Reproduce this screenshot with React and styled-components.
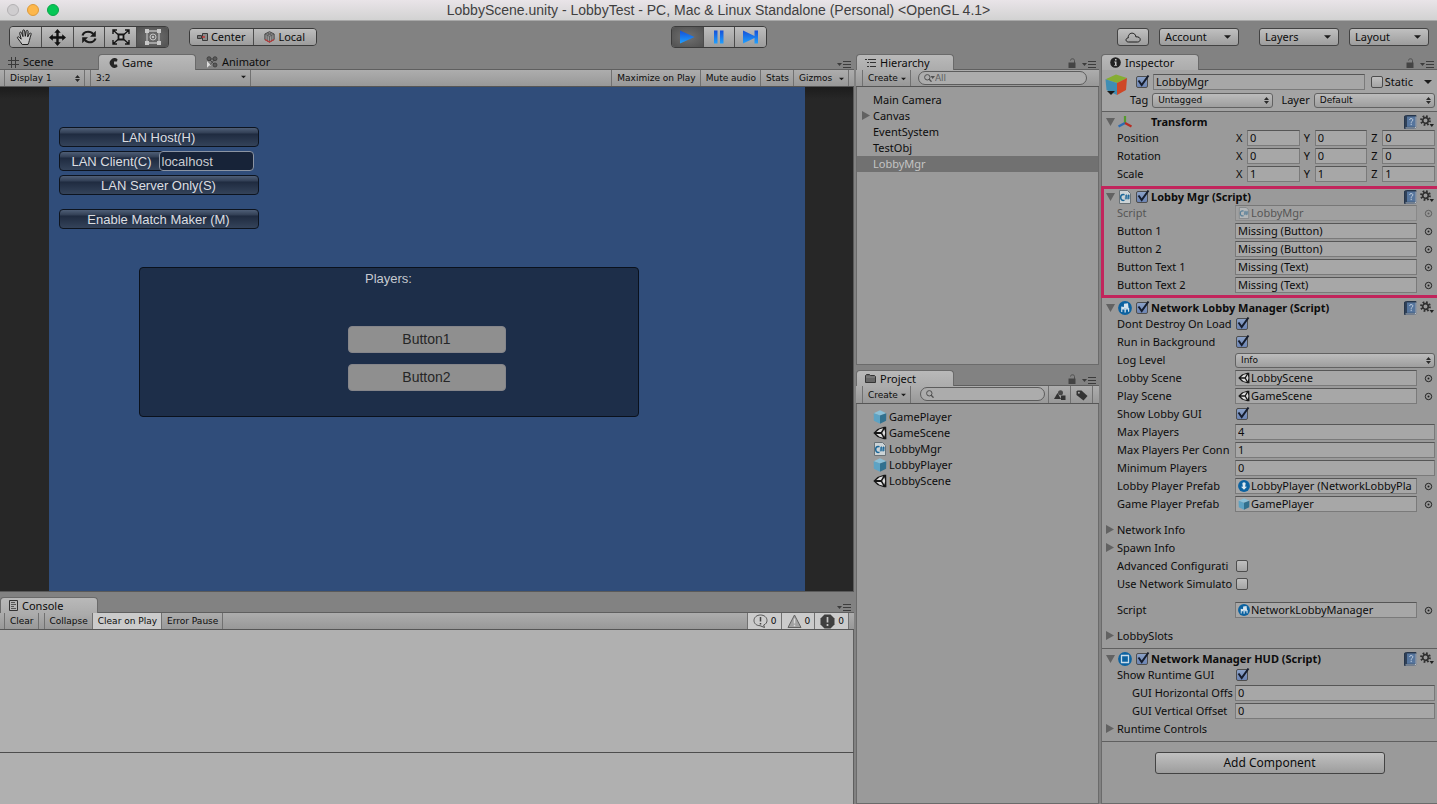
import React, { useId } from "react"
import styled, { createGlobalStyle, css } from "styled-components"

const font_ui = `"Noto Sans", "Open Sans", sans-serif`
const font_mini = `"DejaVu Sans", sans-serif`
const font_game = `"Liberation Sans", Arial, sans-serif`

const color_chrome = "#828282"
const color_panel = "#9a9a9a"
const color_line = "#5f5f5f"
const color_text = "#0c0c0c"
const color_icon = "#3c3c3c"
const color_accent = "#c2255c"

const GlobalStyle = createGlobalStyle`
  * {
    box-sizing: border-box;
  }
  body {
    margin: 0;
    background: ${color_chrome};
    color: ${color_text};
    font: 11px/16px ${font_ui};
  }
  button, input, select {
    font: inherit;
    color: inherit;
    margin: 0;
    padding: 0;
    border: 0;
    border-radius: 0;
    background: none;
    appearance: none;
    min-width: 0;
    outline: none;
  }
  svg {
    display: block;
    flex: none;
  }
`

const Flex = (justify, align) => css`
  display: flex;
  justify-content: ${justify};
  align-items: ${align};
`

const buttonFace = css`
  background: linear-gradient(#c0c0c0, #9d9d9d);
  border: 1px solid #434343;
`

/* ---------- window ---------- */

const Window = styled.div`
  display: flex;
  flex-direction: column;
  height: 100vh;
  overflow: hidden;
`

const TitleBar = styled.header`
  ${Flex("center", "center")}
  position: relative;
  height: 21px;
  flex: none;
  background: linear-gradient(#e9e4e8, #d2d2d2);
  border-bottom: 1px solid #a8a8a8;
`

const Title = styled.h1`
  margin: 0;
  font: 14px/20px ${font_game};
  color: #3f3f3f;
`

const Lights = styled.div`
  ${Flex("flex-start", "center")}
  gap: 8px;
  position: absolute;
  left: 7px;
  top: 4px;
`

const Light = styled.button`
  width: 12px;
  height: 12px;
  border-radius: 50%;
  background: ${(p) => p.$fill};
  border: 1px solid ${(p) => p.$edge};
`

const Toolbar = styled.div`
  display: grid;
  grid-template-columns: 1fr auto 1fr;
  align-items: center;
  flex: none;
  height: 32px;
  padding: 0 8px 0 9px;
`

const ToolGroup = styled.div`
  ${Flex("flex-start", "center")}
  gap: 20px;
`

const ToolSet = styled.div`
  display: flex;
  width: ${(p) => p.$width}px;
  border: 1px solid #3b3b3b;
  border-radius: 4px;
  overflow: hidden;
`

const ToolButton = styled.button`
  ${Flex("center", "center")}
  gap: 3px;
  flex: 1;
  height: ${(p) => (p.$wide ? 16 : 20)}px;
  background: ${(p) =>
    p.$on ? "radial-gradient(#717171, #505050)" : "linear-gradient(#bebebe, #9c9c9c)"};
  & + & {
    border-left: 1px solid #4c4c4c;
  }
`

const RightTools = styled.div`
  ${Flex("flex-end", "center")}
  gap: 10px;
`

const CloudButton = styled.button`
  ${Flex("center", "center")}
  ${buttonFace}
  width: 32px;
  height: 18px;
  border-radius: 3px;
`

const MenuButton = styled.button`
  ${Flex("space-between", "center")}
  ${buttonFace}
  width: 80px;
  height: 18px;
  padding: 0 7px 0 5px;
  border-radius: 3px;
  margin-right: ${(p) => p.$after || 0}px;
`

/* ---------- panels ---------- */

const Workspace = styled.main`
  display: grid;
  grid-template-columns: minmax(0, 1fr) 243px 336px;
  column-gap: 2px;
  flex: 1;
  min-height: 0;
`

const Column = styled.div`
  display: grid;
  grid-template-rows: ${(p) => p.$rows};
  row-gap: 4px;
  min-height: 0;
  min-width: 0;
`

const Panel = styled.section`
  display: flex;
  flex-direction: column;
  min-height: 0;
  min-width: 0;
`

const TabRow = styled.div`
  display: flex;
  flex: none;
  height: 17px;
  padding-top: 1px;
  border-bottom: 1px solid ${color_line};
`

const Tab = styled.button`
  ${Flex("flex-start", "center")}
  gap: 4px;
  width: 98px;
  height: 16px;
  padding-left: ${(p) => p.$pad || 8}px;
  border-radius: 4px 4px 0 0;
  ${(p) =>
    p.$on &&
    css`
      background: linear-gradient(#b9b9b9, #acacac);
      border: 1px solid #6a6a6a;
      border-bottom: 0;
    `}
`

const TabTools = styled.div`
  ${Flex("flex-end", "flex-end")}
  gap: 6px;
  margin-left: auto;
  padding: 0 3px 1px 0;
`

const Strip = styled.div`
  display: flex;
  flex: none;
  height: ${(p) => p.$height || 17}px;
  padding-left: ${(p) => p.$start || 4}px;
  padding-right: ${(p) => p.$end || 0}px;
  background: linear-gradient(#adadad, #989898);
  border-bottom: 1px solid #565656;
  font: 9px/15px ${font_mini};
`

const StripButton = styled.button`
  ${Flex("center", "center")}
  gap: 3px;
  padding: 1px 4px 0 5px;
  border-right: 1px solid #717171;
  border-left: ${(p) => (p.$first ? "1px solid #717171" : 0)};
  background: ${(p) => (p.$on ? "#cbcbcb" : "none")};
  min-width: ${(p) => p.$min || 0}px;
`

const Spacer = styled.div`
  flex: ${(p) => (p.$size ? `0 0 ${p.$size}px` : 1)};
`

/* ---------- drop-downs and tick boxes ---------- */

const SelectBox = styled.span`
  position: relative;
  display: flex;
  min-width: 0;
  flex: ${(p) => (p.$width ? `0 0 ${p.$width}px` : 1)};
  font: 9px/13px ${font_mini};
  select {
    width: 100%;
    padding-left: 5px;
  }
  svg {
    position: absolute;
    right: 4px;
    top: 4px;
    pointer-events: none;
  }
  ${(p) =>
    p.$flat
      ? css`
          border-left: 1px solid #717171;
          border-right: 1px solid #717171;
          select {
            padding-top: 1px;
          }
          svg {
            top: 5px;
          }
        `
      : css`
          height: 15px;
          select {
            background: linear-gradient(#bcbcbc, #9e9e9e);
            border: 1px solid #626262;
            border-radius: 3px;
          }
        `}
`

const Tick = styled.span`
  position: relative;
  display: block;
  flex: none;
  width: 12px;
  height: 12px;
  margin-left: 1px;
  input {
    display: block;
    width: 12px;
    height: 12px;
    border: 1px solid #4d4d4d;
    border-radius: 2px;
    background: linear-gradient(#c0c0c0, #a4a4a4);
  }
  input:checked {
    background: linear-gradient(#8ba1c6, #6c84b3);
  }
  svg {
    position: absolute;
    left: 1px;
    top: -2px;
    pointer-events: none;
    visibility: hidden;
  }
  input:checked + svg {
    visibility: visible;
  }
`

/* ---------- game view ---------- */

const GameArea = styled.div`
  ${Flex("center", "stretch")}
  flex: 1;
  min-height: 0;
  background: linear-gradient(#1c1c1c, #272727 12px);
  border-right: 1px solid #5a5a5a;
  border-bottom: 1px solid #5a5a5a;
`

const GameScreen = styled.div`
  position: relative;
  aspect-ratio: 3 / 2;
  padding: 40px 10px;
  background: #304d7a;
  color: #dcdee1;
  font: 13px/18px ${font_game};
`

const HudList = styled.div`
  display: flex;
  flex-direction: column;
  gap: 4px;
  width: 200px;
`

const HudButton = styled.button`
  height: 20px;
  padding-top: 1px;
  margin-top: ${(p) => (p.$apart ? 10 : 0)}px;
  border: 1px solid #0d141f;
  border-radius: 4px;
  background: linear-gradient(#4f5f77, #323f55 5px, #1f2b40 6px, #34435a);
`

/* the address box laps over the end of the client button */
const HudRow = styled.div`
  display: flex;
  ${HudButton} {
    width: 106px;
    margin-right: -6px;
  }
`

const HudInput = styled.input`
  position: relative;
  width: 95px;
  height: 20px;
  padding-left: 2px;
  border: 1px solid #8b94a3;
  border-radius: 4px;
  background: #172338;
  color: #c9ccd1;
`

const PlayersBox = styled.div`
  width: 500px;
  height: 150px;
  margin: 38px 0 0 80px;
  padding-top: 2px;
  text-align: center;
  color: #c6cad0;
  border: 1px solid #0a111c;
  border-radius: 4px;
  background: #1d2e49;
`

/* the scene's own canvas floats above the lobby gui */
const SceneCanvas = styled.div`
  position: absolute;
  inset: 0;
  display: flex;
  flex-direction: column;
  justify-content: center;
  align-items: center;
  gap: 11px;
  padding-top: 38px;
`

const SceneButton = styled.button`
  width: 158px;
  height: 27px;
  border-radius: 4px;
  background: #8f8f8f;
  border: 1px solid #85858a;
  color: #262626;
  font-size: 14px;
`

/* ---------- console ---------- */

const LogList = styled.div`
  flex: 1;
  background: #b0b0b0;
  border-right: 1px solid ${color_line};
`

const LogDetail = styled.div`
  height: 52px;
  background: #b0b0b0;
  border-top: 1px solid #4d4d4d;
  border-right: 1px solid ${color_line};
`

/* ---------- hierarchy and project ---------- */

const List = styled.ul`
  flex: 1;
  margin: 0;
  padding: 5px 0 0;
  list-style: none;
  background: ${color_panel};
  border: 1px solid #6b6b6b;
  border-top: 0;
`

const ListRow = styled.li`
  ${Flex("flex-start", "center")}
  gap: 2px;
  height: 16px;
  padding-left: ${(p) => (p.$fold ? 4 : 16)}px;
  color: ${(p) => (p.$on ? "#c4c4c4" : "inherit")};
  background: ${(p) => (p.$on ? "#717171" : "none")};
`

const Search = styled.label`
  ${Flex("flex-start", "center")}
  width: ${(p) => p.$width}px;
  height: 14px;
  margin: 1px 0 0 ${(p) => p.$indent}px;
  padding-left: 5px;
  border: 1px solid #5c5c5c;
  border-radius: 8px;
  background: #acacac;
  color: #5e5e5e;
  input {
    flex: 1;
    height: 12px;
  }
  input::placeholder {
    color: #5e5e5e;
    opacity: 1;
  }
`

/* ---------- inspector ---------- */

const InspectorBody = styled.div`
  display: flex;
  flex-direction: column;
  flex: 1;
  background: ${color_panel};
  border-left: 1px solid #6b6b6b;
  border-bottom: 1px solid #6b6b6b;
`

const ObjectHeader = styled.div`
  display: grid;
  grid-template-columns: 25px minmax(0, 1fr);
  height: 42px;
  padding: 4px 2px 0 3px;
  background: #a4a4a4;
  border-bottom: 1px solid ${color_line};
`

const HeaderRow = styled.div`
  ${Flex("flex-start", "center")}
  gap: ${(p) => p.$gap}px;
  padding-left: ${(p) => p.$indent}px;
  height: ${(p) => p.$height}px;
`

const MoreMark = styled.button`
  padding: 0 3px 0 6px;
`

const LayerLabel = styled.label`
  margin-left: 4px;
`

const Component = styled.section`
  padding: 2px 0 3px;
  border-bottom: ${(p) => (p.$open ? 0 : `1px solid ${color_line}`)};
  ${(p) =>
    p.$marked &&
    css`
      margin-left: -1px;
      padding: 0 0 1px;
      border: 3px solid ${color_accent};
      border-right: 0;
    `}
`

const ComponentHead = styled.div`
  ${Flex("flex-start", "center")}
  height: 15px;
  padding: 0 3px 0 ${(p) => (p.$marked ? 1 : 3)}px;
  gap: 3px;
`

const ComponentTitle = styled.h2`
  flex: 1;
  margin: 0;
  padding-left: ${(p) => (p.$bare ? 16 : 0)}px;
  font: bold 11px/15px ${font_ui};
  white-space: nowrap;
`

const IconSlot = styled.span`
  ${Flex("center", "center")}
  width: 14px;
`

const Row = styled.div`
  display: grid;
  grid-template-columns: 118px minmax(0, 1fr) ${(p) => (p.$pick ? "18px" : "0")};
  align-items: center;
  height: 18px;
  padding: 0 2px 0 ${(p) => (p.$marked ? 13 : 15)}px;
  margin-top: ${(p) => (p.$apart ? 8 : 0)}px;
  opacity: ${(p) => (p.$dim ? 0.5 : 1)};
`

const RowLabel = styled.label`
  white-space: nowrap;
  padding-left: ${(p) => (p.$deep ? 15 : 0)}px;
`

const FoldRow = styled.button`
  ${Flex("flex-start", "center")}
  gap: 2px;
  width: 100%;
  height: 18px;
  padding-left: 3px;
  margin-top: ${(p) => (p.$apart ? 8 : 0)}px;
`

const fieldFace = css`
  height: 16px;
  border: 1px solid #7a7a7a;
  border-top-color: #565656;
  background: #a7a7a7;
`

const TextField = styled.input`
  ${fieldFace}
  flex: 1;
  width: 100%;
  padding-left: 2px;
`

const ObjectField = styled.div`
  ${Flex("flex-start", "center")}
  ${fieldFace}
  gap: 1px;
  padding-left: 2px;
  input {
    flex: 1;
    height: 14px;
  }
`

const PickButton = styled.button`
  ${Flex("flex-end", "center")}
  padding-right: 2px;
`

const Vector = styled.div`
  display: flex;
  gap: 3px;
  label {
    ${Flex("flex-start", "center")}
    flex: 1;
    min-width: 0;
  }
  span {
    width: 12px;
    flex: none;
    padding-left: 1px;
  }
`

const IconButton = styled.button`
  ${Flex("center", "center")}
`

const AddButton = styled.button`
  ${buttonFace}
  width: 230px;
  height: 22px;
  margin: 10px auto 0;
  border-radius: 3px;
  font-size: 12px;
`

/* ---------- icons ---------- */

const Down = ({ size = 7 }) => (
  <svg width={size} height="4" viewBox="0 0 8 4">
    <path d="M0 0h8L4 4z" fill="#1b1b1b" />
  </svg>
)

const UpDown = () => (
  <svg width="5" height="7" viewBox="0 0 5 7">
    <path d="M0 3L2.500 0 5 3zM0 4h5L2.500 7z" fill="#2a2a2a" />
  </svg>
)

const Fold = ({ open }) => (
  <svg width="10" height="10" viewBox="0 0 10 10">
    <path d={open ? "M1 1h9L5.500 9z" : "M1 0v9l8-4.500z"} fill="#626262" />
  </svg>
)

const Burger = () => (
  <svg width="14" height="7" viewBox="0 0 14 7">
    <path d="M0 2h5L2.500 5z" fill={color_icon} />
    <path d="M6 .5h8M6 3.500h8M6 6.500h8" stroke={color_icon} />
  </svg>
)

const Lock = () => (
  <svg width="8" height="10" viewBox="0 0 8 10">
    <path d="M2.500 2.500C2.500.2 6.500.2 6.500 2.500V5" fill="none" stroke="#4f4f4f" />
    <path d="M.5 4.500h7V10h-7z" fill="#444" />
  </svg>
)

const HandIcon = () => (
  <svg width="18" height="18" viewBox="0 0 18 18">
    <path
      d="M6.200 16.500C5 14.500 3.200 12.500 1.600 10.200c-.7-1.300.8-1.900 1.700-.9l1.900 1.900L3.700 5.400c-.3-1.500 1.300-1.800 1.800-.6L7 8.600 6.700 3c0-1.500 1.800-1.500 2 0l.6 5.300.9-5c.3-1.400 2-1.100 1.900.3l-.4 5.300 1.700-3.300c.7-1.200 2.100-.5 1.700.8-.8 2.500-1.200 4.100-1.700 6-.3 1.500-.8 2.500-1.400 4.100z"
      fill="#c4c4c4"
      stroke="#1d1d1d"
      strokeLinejoin="round"
    />
  </svg>
)

const MoveIcon = () => (
  <svg width="17" height="17" viewBox="0 0 17 17">
    <path
      d="M8.500 0l3.200 3.800H9.700v3.500h3.500V5.300L17 8.500l-3.800 3.200V9.700H9.700v3.500h2L8.500 17l-3.200-3.800h2V9.700H3.800v2L0 8.500l3.800-3.200v2h3.500V3.800h-2z"
      fill="#111"
    />
  </svg>
)

const RotateIcon = () => (
  <svg width="16" height="14" viewBox="0 0 16 14">
    <path
      d="M1.500 5.500C2.500 2.300 6 1.400 9 2c1.500.3 2.300 1 3.200 2M14.500 8.500c-1 3.200-4.500 4.100-7.500 3.500-1.500-.3-2.300-1-3.200-2"
      fill="none"
      stroke="#1a1a1a"
      strokeWidth="2.200"
    />
    <path d="M14.800.8v6H9zM1.200 13.200v-6H7z" fill="#1a1a1a" />
  </svg>
)

const ScaleIcon = () => (
  <svg width="18" height="16" viewBox="0 0 18 16">
    <path
      d="M1 5V1h4M13 1h4v4M1 11v4h4M13 15h4v-4M1 1l5 4.500M17 1l-5 4.500M1 15l5-4.500M17 15l-5-4.500"
      fill="none"
      stroke="#161616"
      strokeWidth="1.400"
    />
    <path d="M6.500 5.500h5v5h-5z" fill="#c0c0c0" stroke="#161616" strokeWidth="1.800" />
  </svg>
)

const RectIcon = () => (
  <svg width="18" height="18" viewBox="0 0 18 18">
    <path d="M3 3h12v12H3z" fill="none" stroke="#b9b9b9" strokeWidth="1.300" />
    <path d="M1 1h4v4H1zM13 1h4v4h-4zM1 13h4v4H1zM13 13h4v4h-4z" fill="#c8c8c8" />
    <circle cx="9" cy="9" r="3" fill="none" stroke="#c2c2c2" />
    <circle cx="9" cy="9" r="1" fill="#ddd" />
  </svg>
)

const CenterIcon = () => (
  <svg width="11" height="8" viewBox="0 0 11 8">
    <path d="M.5 2.500h4v3h-4z" fill="#777" stroke="#3a3a3a" />
    <path d="M5.500.5h5v7h-5z" fill="#8a8a8a" stroke="#3a3a3a" />
    <path d="M5 4h3" stroke="#c03434" strokeWidth="1.500" />
  </svg>
)

const LocalIcon = () => (
  <svg width="11" height="12" viewBox="0 0 11 12">
    <path d="M5.500.7l4.600 2.300v5.500l-4.600 2.600L.9 8.500V3z" fill="#989898" stroke="#444" />
    <path d="M.9 3l4.600 2.300L10.100 3M5.500 5.300V11M3.200 1.900l4.600 2.300v5.500M7.800 1.900L3.200 4.200v5.500" fill="none" stroke="#555" strokeWidth=".8" />
    <path d="M.9 8.500l4.600 2.600 4.600-2.600" fill="none" stroke="#b93a3a" strokeWidth="1.200" />
  </svg>
)

const PlayIcon = ({ kind }) => (
  <svg width="18" height="14" viewBox="0 0 18 14">
    <defs>
      <linearGradient id={"blue-" + kind} x2="0" y2="1">
        <stop offset="0" stopColor="#1550d8" />
        <stop offset="1" stopColor="#1fa0ff" />
      </linearGradient>
    </defs>
    <path
      d={
        kind === "play"
          ? "M2 .5v13L16.500 7z"
          : kind === "pause"
          ? "M4 .5h3.500v13H4zM10 .5h3.500v13H10z"
          : "M1 .5v13l11.500-5.500v5.500H16V.5h-3.500V6z"
      }
      fill={`url(#blue-${kind})`}
    />
  </svg>
)

const CloudIcon = () => (
  <svg width="16" height="11" viewBox="0 0 16 11">
    <path
      d="M3.500 10C.3 10 .2 6 3.200 6 3 2 6.200.3 8.800 1.600c1.500.7 2 2 2 3.200C14 4.600 15.200 6 15.200 7.500S14 10 12.500 10z"
      fill="none"
      stroke="#1d1d1d"
    />
  </svg>
)

const GridIcon = () => (
  <svg width="11" height="11" viewBox="0 0 11 11">
    <path d="M3.500 0v11M7.500 0v11M0 3.500h11M0 7.500h11" stroke="#3a3a3a" />
  </svg>
)

const PacIcon = () => (
  <svg width="9" height="10" viewBox="0 0 9 10">
    <path d="M8.500 1.200A4.800 4.800 0 1 0 8.500 8.800L8 6.500H5V3.500h3z" fill="#262626" />
  </svg>
)

const AnimatorIcon = () => (
  <svg width="12" height="12" viewBox="0 0 12 12">
    <path d="M3 3h6L3 10M3 3l6 6" fill="none" stroke="#4a4a4a" />
    <g fill="#5a5a5a" stroke="#333" strokeWidth=".7">
      <circle cx="3" cy="2.700" r="2" />
      <circle cx="9" cy="2.700" r="2" />
      <circle cx="9" cy="9" r="2" />
    </g>
    <path d="M1 5l4 4.500-2 .3-2 2z" fill="#ddd" />
  </svg>
)

const ConsoleIcon = () => (
  <svg width="9" height="11" viewBox="0 0 9 11">
    <path d="M.5.5h8v10h-8z" fill="#b5b5b5" stroke="#333" />
    <path d="M2 2.500h4M2 4.500h5M2 6.500h3M2 8.500h5" stroke="#555" />
  </svg>
)

const TreeIcon = () => (
  <svg width="11" height="10" viewBox="0 0 11 10">
    <path d="M0 1.500h2M3 1.500h8M2 4.500h2M5 4.500h6M2 8.500h2M5 8.500h6" stroke="#333" />
  </svg>
)

const FolderIcon = () => (
  <svg width="11" height="9" viewBox="0 0 11 9">
    <path d="M.5 1.500l1-1h3l1 1h4l1 1v6H.5z" fill="#666" stroke="#353535" />
    <path d="M1 3h9" stroke="#999" strokeWidth=".7" />
  </svg>
)

const InfoIcon = () => (
  <svg width="11" height="11" viewBox="0 0 11 11">
    <circle cx="5.500" cy="5.500" r="5.300" fill="#222" />
    <path d="M5 2h1.500v1.500H5zM4.300 4.600h2.200v3.300H7v.9H4.200v-.9h.8V5.500h-.7z" fill="#c5c5c5" />
  </svg>
)

const Lens = ({ menu }) => (
  <svg width={menu ? 11 : 8} height="8" viewBox={menu ? "0 0 11 8" : "0 0 8 8"}>
    <circle cx="3.300" cy="3.300" r="2.700" fill="none" stroke="#505050" />
    <path d="M5 5l2.500 2.700" stroke="#505050" strokeWidth="1.300" />
    {menu && <path d="M6.500 2h4.500L8.700 5z" fill="#505050" />}
  </svg>
)

const ShapesIcon = () => (
  <svg width="12" height="10" viewBox="0 0 12 10">
    <path d="M0 9l3.500-6L7 9z" fill="#333" />
    <circle cx="6.500" cy="2.700" r="2.500" fill="#484848" />
    <path d="M7 5.500h4.500V10H7z" fill="#333" />
  </svg>
)

const TagIcon = () => (
  <svg width="12" height="11" viewBox="0 0 12 11">
    <path d="M.5 1.500L1.500.5h4L11.500 6 7.500 10.500.5 5z" fill="#333" />
    <circle cx="2.900" cy="2.800" r="1" fill="#aaa" />
  </svg>
)

const SceneIcon = ({ size = 14 }) => (
  <svg width={size} height={size} viewBox="0 0 14 14">
    <path d="M.3 7L4.500 3 11 .8h2.200l.2 12.400H11L4.500 11z" fill="#161616" />
    <path d="M3.300 6L6.500 3.200l3.700-.9L8 6.100zM3.300 8L6.500 10.800l3.700.9L8 7.900zM9.200 7l2.200-3.700.8 3.700-.8 3.700z" fill="#dcdcdc" />
  </svg>
)

const ScriptIcon = ({ size = 14 }) => (
  <svg width={size} height={size} viewBox="0 0 14 14">
    <path d="M1.500.5h8l3 3v10h-11z" fill="#ccd3d6" stroke="#697277" />
    <path d="M6.500 4.700C3.600 3.600 2.600 6 2.700 7.500c0 2 1.400 3.600 3.800 2.600" fill="none" stroke="#1b6798" strokeWidth="1.500" />
    <path d="M8.400 4.500l-.5 5M10.600 4.500l-.5 5M7 6h5M6.800 8h5" stroke="#1b6798" />
  </svg>
)

const PrefabIcon = ({ size = 14 }) => (
  <svg width={size} height={size} viewBox="0 0 14 14">
    <path d="M7 .3l6.300 2.900L7 5.500.7 3.200z" fill="#8cc1d8" />
    <path d="M.7 3.200L7 5.500v8.200L.9 10.700z" fill="#5da3c4" />
    <path d="M13.300 3.200L7 5.500v8.200l6.100-3z" fill="#31718f" />
  </svg>
)

const CubeIcon = () => (
  <svg width="23" height="22" viewBox="0 0 23 22">
    <path d="M11 .5L22 4l-10 5L.5 5.200z" fill="#86ad31" />
    <path d="M.5 5.200L12 9v12L1.500 16z" fill="#3f8db3" />
    <path d="M22 4L12 9v12l9-5z" fill="#cf4726" />
    <path d="M2 17h8l-4 4z" fill="#1a1a1a" />
  </svg>
)

const AxisIcon = () => (
  <svg width="14" height="12" viewBox="0 0 14 12">
    <path d="M7 0v7" stroke="#559a2d" strokeWidth="2.200" />
    <path d="M7 7l-6.500 3.500" stroke="#2b6bb3" strokeWidth="2.400" />
    <path d="M7 7l6.500 3.500" stroke="#b72c22" strokeWidth="2.400" />
  </svg>
)

const NetIcon = ({ kind, size = 14 }) => (
  <svg width={size} height={size} viewBox="0 0 14 14">
    <circle cx="7" cy="7" r="6.900" fill="#0c62a0" />
    {kind === "lobby" && (
      <>
        <path d="M6 2.800l4-.6.6 4.800H5.800z" fill="#d6e4ed" />
        <path d="M3.200 5.500L6 6v1.300l5.200-.3v3.800H10V8.500H7.800v3H6.500v-3H4.300V11H3.200z" fill="#d6e4ed" />
      </>
    )}
    {kind === "hud" && <path d="M3.500 3.500h7v7h-7z" fill="none" stroke="#c9dce9" strokeWidth="1.300" />}
    {kind === "player" && (
      <>
        <circle cx="7" cy="4.500" r="2" fill="#dce8ef" />
        <path d="M5.500 5.500h3V8h2L7 11.500 3.500 8h2z" fill="#dce8ef" />
      </>
    )}
  </svg>
)

const BookIcon = () => (
  <svg width="13" height="14" viewBox="0 0 13 14">
    <path d="M.5 1.200L2.500.5H12v11.800l-1.500 1.200H.5z" fill="#2f4057" stroke="#26354a" />
    <path d="M3 1.500h8.500v10.300H3z" fill="#56759d" />
    <path d="M12 1.500V12l-1 1H1.500" fill="none" stroke="#b7c1cd" />
    <path d="M5.500 4.800c.3-1.800 3.600-1.600 3.300.3-.2 1.200-1.600 1.200-1.600 2.700M7.200 8.700v1.400" fill="none" stroke="#c3cfde" />
  </svg>
)

const GearIcon = () => (
  <svg width="14" height="13" viewBox="0 0 14 13">
    <circle cx="5.500" cy="5.500" r="4.300" fill="none" stroke="#303030" strokeWidth="2.200" strokeDasharray="1.700 1.680" />
    <circle cx="5.500" cy="5.500" r="2.800" fill="none" stroke="#303030" strokeWidth="1.700" />
    <path d="M9.500 9H14l-2.200 3z" fill="#222" />
  </svg>
)

const TargetIcon = () => (
  <svg width="9" height="9" viewBox="0 0 9 9">
    <circle cx="4.500" cy="4.500" r="3.200" fill="none" stroke="#222" />
    <circle cx="4.500" cy="4.500" r="1" fill="#222" />
  </svg>
)

const BubbleIcon = () => (
  <svg width="15" height="15" viewBox="0 0 15 15">
    <path d="M7.500 1C3.800 1 1 3.300 1 6.500s2.800 5.200 6 5.200l4.500 1.800-.8-2.500C13 10 14 8.500 14 6.500 14 3.300 11.200 1 7.500 1z" fill="#ccc" stroke="#555" />
    <path d="M7.500 3v4.500M7.500 9v1.500" stroke="#444" strokeWidth="1.500" />
  </svg>
)

const WarnIcon = () => (
  <svg width="15" height="15" viewBox="0 0 15 15">
    <path d="M7.500 1L14 13.500H1z" fill="#a2a2a2" stroke="#626262" strokeLinejoin="round" />
    <path d="M7.500 4.500v5M7.500 10.800v1.500" stroke="#d8d8d8" strokeWidth="1.500" />
  </svg>
)

const ErrorIcon = () => (
  <svg width="15" height="15" viewBox="0 0 15 15">
    <path d="M4.500.5h6l4 4v6l-4 4h-6l-4-4v-6z" fill="#3f3f3f" />
    <path d="M7.500 3v5.500M7.500 10v2" stroke="#c6c6c6" strokeWidth="1.700" />
  </svg>
)

/* ---------- small parts ---------- */

const CheckBox = ({ label, ...rest }) => (
  <Tick>
    <input type="checkbox" aria-label={label} {...rest} />
    <svg width="13" height="13" viewBox="0 0 13 13">
      <path d="M1.500 6.500l3.200 4.500L11.500 1.500" fill="none" stroke="#151c2c" strokeWidth="2" />
    </svg>
  </Tick>
)

const DropDown = ({ id, label, value, width, flat, arrow }) => (
  <SelectBox $width={width} $flat={flat}>
    <select id={id} aria-label={label} defaultValue={value}>
      <option>{value}</option>
    </select>
    {arrow ? <Down size={5} /> : <UpDown />}
  </SelectBox>
)

const PanelTools = ({ lock }) => (
  <TabTools>
    {lock && (
      <IconButton aria-label="Lock">
        <Lock />
      </IconButton>
    )}
    <IconButton aria-label="Panel menu">
      <Burger />
    </IconButton>
  </TabTools>
)

const Prop = ({ name, value, type = "object", icon, deep, apart, dim, marked }) => {
  const id = useId()
  const isObject = type === "object"
  return (
    <Row $pick={isObject} $apart={apart} $dim={dim} $marked={marked}>
      <RowLabel htmlFor={id} $deep={deep}>
        {name}
      </RowLabel>
      {type === "check" && <CheckBox id={id} defaultChecked={value} />}
      {type === "text" && <TextField id={id} defaultValue={value} />}
      {type === "select" && <DropDown id={id} value={value} />}
      {isObject && (
        <>
          <ObjectField>
            {icon}
            <input id={id} readOnly value={value} />
          </ObjectField>
          <PickButton aria-label={"Pick " + name}>
            <TargetIcon />
          </PickButton>
        </>
      )}
    </Row>
  )
}

const VectorProp = ({ name, values }) => (
  <Row>
    <RowLabel as="span">{name}</RowLabel>
    <Vector>
      {["X", "Y", "Z"].map((axis, i) => (
        <label key={axis}>
          <span>{axis}</span>
          <TextField defaultValue={values[i]} />
        </label>
      ))}
    </Vector>
  </Row>
)

const Head = ({ title, icon, bare, marked }) => (
  <ComponentHead $marked={marked}>
    <Fold open />
    <IconSlot>{icon}</IconSlot>
    {!bare && <CheckBox label={title} defaultChecked />}
    <ComponentTitle $bare={bare}>{title}</ComponentTitle>
    <IconButton aria-label="Help">
      <BookIcon />
    </IconButton>
    <IconButton aria-label="Settings">
      <GearIcon />
    </IconButton>
  </ComponentHead>
)

const FoldProp = ({ name, apart }) => (
  <FoldRow $apart={apart}>
    <Fold />
    {name}
  </FoldRow>
)

/* ---------- sections ---------- */

const MainToolbar = () => (
  <Toolbar>
    <ToolGroup>
      <ToolSet $width={160}>
        <ToolButton aria-label="Hand"><HandIcon /></ToolButton>
        <ToolButton aria-label="Move"><MoveIcon /></ToolButton>
        <ToolButton aria-label="Rotate"><RotateIcon /></ToolButton>
        <ToolButton aria-label="Scale"><ScaleIcon /></ToolButton>
        <ToolButton aria-label="Rect" $on><RectIcon /></ToolButton>
      </ToolSet>
      <ToolSet $width={128}>
        <ToolButton $wide><CenterIcon />Center</ToolButton>
        <ToolButton $wide><LocalIcon />Local</ToolButton>
      </ToolSet>
    </ToolGroup>
    <ToolSet $width={96}>
      <ToolButton aria-label="Play" $on><PlayIcon kind="play" /></ToolButton>
      <ToolButton aria-label="Pause"><PlayIcon kind="pause" /></ToolButton>
      <ToolButton aria-label="Step"><PlayIcon kind="step" /></ToolButton>
    </ToolSet>
    <RightTools>
      <CloudButton aria-label="Services"><CloudIcon /></CloudButton>
      <MenuButton $after={10}>Account<Down /></MenuButton>
      <MenuButton>Layers<Down /></MenuButton>
      <MenuButton>Layout<Down /></MenuButton>
    </RightTools>
  </Toolbar>
)

const GamePanel = () => (
  <Panel>
    <TabRow>
      <Tab><GridIcon />Scene</Tab>
      <Tab $on $pad={10}><PacIcon />Game</Tab>
      <Tab $pad={10}><AnimatorIcon />Animator</Tab>
      <PanelTools />
    </TabRow>
    <Strip $end={5}>
      <DropDown label="Display" value="Display 1" width={81} flat />
      <Spacer $size={5} />
      <DropDown label="Aspect" value="3:2" width={161} flat arrow />
      <Spacer />
      <StripButton $first>Maximize on Play</StripButton>
      <StripButton>Mute audio</StripButton>
      <StripButton>Stats</StripButton>
      <StripButton $min={55}>Gizmos <Spacer /><Down size={5} /></StripButton>
    </Strip>
    <GameArea>
      <GameScreen>
        <HudList>
          <HudButton>LAN Host(H)</HudButton>
          <HudRow>
            <HudButton>LAN Client(C)</HudButton>
            <HudInput aria-label="Network address" defaultValue="localhost" />
          </HudRow>
          <HudButton>LAN Server Only(S)</HudButton>
          <HudButton $apart>Enable Match Maker (M)</HudButton>
        </HudList>
        <PlayersBox>Players:</PlayersBox>
        <SceneCanvas>
          <SceneButton>Button1</SceneButton>
          <SceneButton>Button2</SceneButton>
        </SceneCanvas>
      </GameScreen>
    </GameArea>
  </Panel>
)

const ConsolePanel = () => (
  <Panel>
    <TabRow>
      <Tab $on><ConsoleIcon />Console</Tab>
      <PanelTools />
    </TabRow>
    <Strip $end={5}>
      <StripButton $first>Clear</StripButton>
      <Spacer $size={5} />
      <StripButton $first>Collapse</StripButton>
      <StripButton $on>Clear on Play</StripButton>
      <StripButton>Error Pause</StripButton>
      <Spacer />
      <StripButton $first $on $min={33}><BubbleIcon />0</StripButton>
      <StripButton $on $min={32}><WarnIcon />0</StripButton>
      <StripButton $on $min={32}><ErrorIcon />0</StripButton>
    </Strip>
    <LogList />
    <LogDetail />
  </Panel>
)

const HierarchyPanel = () => (
  <Panel>
    <TabRow>
      <Tab $on><TreeIcon />Hierarchy</Tab>
      <PanelTools lock />
    </TabRow>
    <Strip $start={6}>
      <StripButton $first $min={47}>Create <Down size={5} /></StripButton>
      <Search $width={169} $indent={7}>
        <Lens menu />
        <input aria-label="Search hierarchy" placeholder="All" />
      </Search>
    </Strip>
    <List>
      <ListRow>Main Camera</ListRow>
      <ListRow $fold><Fold />Canvas</ListRow>
      <ListRow>EventSystem</ListRow>
      <ListRow>TestObj</ListRow>
      <ListRow $on>LobbyMgr</ListRow>
    </List>
  </Panel>
)

const ProjectPanel = () => (
  <Panel>
    <TabRow>
      <Tab $on><FolderIcon />Project</Tab>
      <PanelTools lock />
    </TabRow>
    <Strip $height={18} $start={6} $end={6}>
      <StripButton $first $min={47}>Create <Down size={5} /></StripButton>
      <Search $width={125} $indent={9}>
        <Lens />
        <input aria-label="Search project" />
      </Search>
      <Spacer />
      <StripButton $first $min={23} aria-label="Search by type"><ShapesIcon /></StripButton>
      <StripButton $min={22} aria-label="Search by label"><TagIcon /></StripButton>
    </Strip>
    <List>
      <ListRow><PrefabIcon />GamePlayer</ListRow>
      <ListRow><SceneIcon />GameScene</ListRow>
      <ListRow><ScriptIcon />LobbyMgr</ListRow>
      <ListRow><PrefabIcon />LobbyPlayer</ListRow>
      <ListRow><SceneIcon />LobbyScene</ListRow>
    </List>
  </Panel>
)

const InspectorPanel = () => (
  <Panel>
    <TabRow>
      <Tab $on><InfoIcon />Inspector</Tab>
      <PanelTools lock />
    </TabRow>
    <InspectorBody>
      <ObjectHeader>
        <CubeIcon />
        <div>
          <HeaderRow $gap={5} $indent={5} $height={16}>
            <CheckBox label="Active" defaultChecked />
            <TextField aria-label="Name" defaultValue="LobbyMgr" />
            <HeaderRow as="label" $gap={2} $indent={0} $height={16}>
              <CheckBox />
              Static
            </HeaderRow>
            <MoreMark aria-label="Static flags">
              <Down size={8} />
            </MoreMark>
          </HeaderRow>
          <HeaderRow $gap={4} $indent={0} $height={20}>
            <label htmlFor="tag">Tag</label>
            <DropDown id="tag" value="Untagged" />
            <LayerLabel htmlFor="layer">Layer</LayerLabel>
            <DropDown id="layer" value="Default" />
          </HeaderRow>
        </div>
      </ObjectHeader>

      <Component $open>
        <Head title="Transform" icon={<AxisIcon />} bare />
        <VectorProp name="Position" values={[0, 0, 0]} />
        <VectorProp name="Rotation" values={[0, 0, 0]} />
        <VectorProp name="Scale" values={[1, 1, 1]} />
      </Component>

      <Component $marked>
        <Head title="Lobby Mgr (Script)" icon={<ScriptIcon />} marked />
        <Prop name="Script" value="LobbyMgr" icon={<ScriptIcon size={12} />} dim marked />
        <Prop name="Button 1" value="Missing (Button)" marked />
        <Prop name="Button 2" value="Missing (Button)" marked />
        <Prop name="Button Text 1" value="Missing (Text)" marked />
        <Prop name="Button Text 2" value="Missing (Text)" marked />
      </Component>

      <Component>
        <Head title="Network Lobby Manager (Script)" icon={<NetIcon kind="lobby" />} />
        <Prop name="Dont Destroy On Load" type="check" value />
        <Prop name="Run in Background" type="check" value />
        <Prop name="Log Level" type="select" value="Info" />
        <Prop name="Lobby Scene" value="LobbyScene" icon={<SceneIcon size={12} />} />
        <Prop name="Play Scene" value="GameScene" icon={<SceneIcon size={12} />} />
        <Prop name="Show Lobby GUI" type="check" value />
        <Prop name="Max Players" type="text" value="4" />
        <Prop name="Max Players Per Conn" type="text" value="1" />
        <Prop name="Minimum Players" type="text" value="0" />
        <Prop
          name="Lobby Player Prefab"
          value="LobbyPlayer (NetworkLobbyPla"
          icon={<NetIcon kind="player" size={12} />}
        />
        <Prop name="Game Player Prefab" value="GamePlayer" icon={<PrefabIcon size={12} />} />
        <FoldProp name="Network Info" apart />
        <FoldProp name="Spawn Info" />
        <Prop name="Advanced Configurati" type="check" value={false} />
        <Prop name="Use Network Simulato" type="check" value={false} />
        <Prop
          name="Script"
          value="NetworkLobbyManager"
          icon={<NetIcon kind="lobby" size={12} />}
          apart
        />
        <FoldProp name="LobbySlots" apart />
      </Component>

      <Component>
        <Head title="Network Manager HUD (Script)" icon={<NetIcon kind="hud" />} />
        <Prop name="Show Runtime GUI" type="check" value />
        <Prop name="GUI Horizontal Offs" type="text" value="0" deep />
        <Prop name="GUI Vertical Offset" type="text" value="0" deep />
        <FoldProp name="Runtime Controls" />
      </Component>

      <AddButton>Add Component</AddButton>
    </InspectorBody>
  </Panel>
)

const App = () => {
  return (
    <Window>
      <GlobalStyle />
      <TitleBar>
        <Lights>
          <Light aria-label="Close" $fill="#cfcdcf" $edge="#b3b1b3" />
          <Light aria-label="Minimize" $fill="#fdb74b" $edge="#dd9a3a" />
          <Light aria-label="Zoom" $fill="#05c755" $edge="#0aa548" />
        </Lights>
        <Title>
          LobbyScene.unity - LobbyTest - PC, Mac &amp; Linux Standalone (Personal) &lt;OpenGL 4.1&gt;
        </Title>
      </TitleBar>
      <MainToolbar />
      <Workspace>
        <Column $rows="minmax(0, 1fr) 208px">
          <GamePanel />
          <ConsolePanel />
        </Column>
        <Column $rows="minmax(0, 312px) minmax(0, 1fr)">
          <HierarchyPanel />
          <ProjectPanel />
        </Column>
        <InspectorPanel />
      </Workspace>
    </Window>
  )
}

export default App
